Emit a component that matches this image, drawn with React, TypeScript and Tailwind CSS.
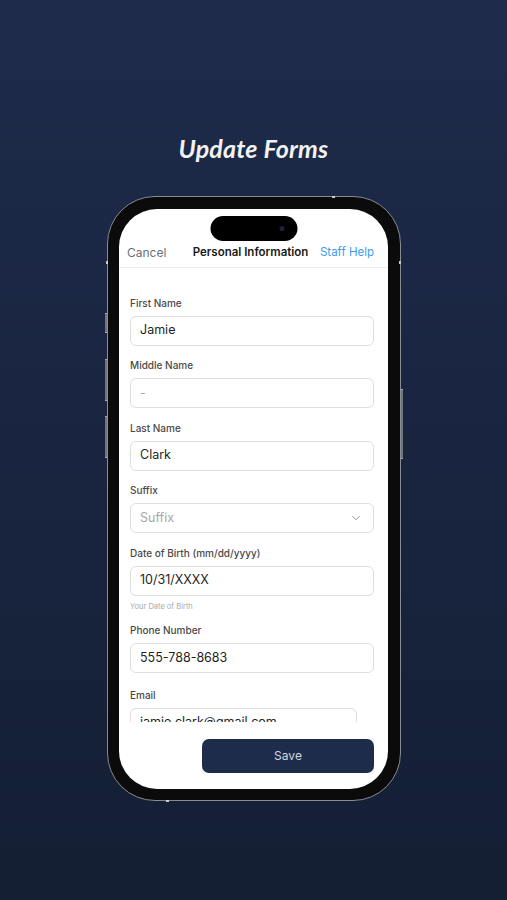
import { ChevronDown } from "lucide-react";

const FIELDS = [
  { label: "First Name", value: "Jamie" },
  { label: "Middle Name", value: "-", placeholder: true },
  { label: "Last Name", value: "Clark" },
];

function Field({
  label,
  value,
  placeholder = false,
  helper,
}: {
  label: string;
  value: string;
  placeholder?: boolean;
  helper?: string;
}) {
  return (
    <div className="flex flex-col">
      <label className="text-[10px] leading-[12px] font-medium text-[#4a4a4a] mb-[7px]">{label}</label>
      <div className="h-[30px] rounded-[6px] border border-[#dedede] bg-white px-[9px] flex items-center">
        <span className={`text-[12.5px] ${placeholder ? "text-[#a8a8a8]" : "text-[#1f1f1f]"}`}>{value}</span>
      </div>
      {helper && <p className="text-[7.5px] leading-[9px] text-[#a9a9a9] mt-[6px]">{helper}</p>}
    </div>
  );
}

function SideButton({ className }: { className: string }) {
  return <div className={`absolute w-[3px] rounded-[1px] bg-[#6f747d] border-y border-[#b9bdc4] ${className}`} />;
}

export default function App() {
  return (
    <div className="w-full h-[900px] bg-gradient-to-b from-[#1e2b4b] to-[#141f34] flex flex-col items-center pt-[133px] font-['Inter',sans-serif]">
      <h1 className="text-[25px] leading-[30px] font-bold italic text-[#f2f2f2] font-['Lato',sans-serif] tracking-[0.2px]">
        Update Forms
      </h1>

      <div className="relative mt-[33px]">
        {/* hardware buttons */}
        <SideButton className="-left-[2px] top-[117px] h-[20px]" />
        <SideButton className="-left-[2px] top-[163px] h-[42px]" />
        <SideButton className="-left-[2px] top-[220px] h-[42px]" />
        <SideButton className="-right-[2px] top-[193px] h-[70px]" />

        <div className="relative w-[294px] h-[605px] rounded-[48px] bg-[#0b0b0c] border-[1.5px] border-[#878c95] p-[11.5px]">
          {/* antenna marks */}
          <div className="absolute top-[-1.5px] left-[224px] w-[3px] h-[2px] bg-[#c9ccd2]" />
          <div className="absolute top-[64px] left-[-1.5px] w-[2px] h-[3px] bg-[#c9ccd2]" />
          <div className="absolute top-[64px] right-[-1.5px] w-[2px] h-[3px] bg-[#c9ccd2]" />
          <div className="absolute bottom-[-1.5px] left-[58px] w-[3px] h-[2px] bg-[#c9ccd2]" />

          <div className="relative w-full h-full rounded-[38px] bg-white overflow-hidden flex flex-col">
            {/* dynamic island */}
            <div className="absolute top-[7px] left-1/2 -translate-x-1/2 w-[87px] h-[25px] rounded-full bg-black">
              <div className="absolute right-[13px] top-[10px] w-[5px] h-[5px] rounded-full bg-[#1c2336]" />
            </div>

            {/* header */}
            <div className="mt-[31px] h-[28px] shrink-0 border-b border-[#eeeeee] grid grid-cols-[1fr_auto_1fr] items-center px-[8px] pr-[14px]">
              <span className="text-[12px] text-[#6a707a]">Cancel</span>
              <span className="text-[11.5px] font-semibold text-[#1a1a1a]">Personal Information</span>
              <span className="text-[11.5px] text-[#3d9cf0] text-right">Staff Help</span>
            </div>

            {/* form */}
            <div className="flex-1 overflow-hidden pl-[11px] pr-[14px] pt-[29px]">
              <div className="flex flex-col gap-[13.5px]">
                {FIELDS.map((f) => (
                  <Field key={f.label} label={f.label} value={f.value} placeholder={f.placeholder} />
                ))}

                <div className="flex flex-col">
                  <label className="text-[10px] leading-[12px] font-medium text-[#4a4a4a] mb-[7px]">Suffix</label>
                  <div className="h-[30px] rounded-[6px] border border-[#dedede] bg-white pl-[9px] pr-[10px] flex items-center justify-between">
                    <span className="text-[12.5px] text-[#a8a8a8]">Suffix</span>
                    <ChevronDown size={14} strokeWidth={1.5} className="text-[#8a8a8a]" />
                  </div>
                </div>

                <Field label="Date of Birth (mm/dd/yyyy)" value="10/31/XXXX" helper="Your Date of Birth" />
                <Field label="Phone Number" value="555-788-8683" />

                <div className="flex flex-col mr-[17px] mt-[2px]">
                  <label className="text-[10px] leading-[12px] font-medium text-[#4a4a4a] mb-[7px]">Email</label>
                  <div className="h-[30px] rounded-[6px] border border-[#dedede] bg-white px-[9px] flex items-center">
                    <span className="text-[12.5px] text-[#1f1f1f]">jamie.clark@gmail.com</span>
                  </div>
                </div>
              </div>
            </div>

            {/* footer */}
            <div className="shrink-0 flex justify-end pr-[14px] pt-[17px] pb-[16px]">
              <button className="w-[172px] h-[34px] rounded-[7px] bg-[#1e2c4c] text-[12px] text-[#d3d7de]">
                Save
              </button>
            </div>
          </div>
        </div>
      </div>
    </div>
  );
}
